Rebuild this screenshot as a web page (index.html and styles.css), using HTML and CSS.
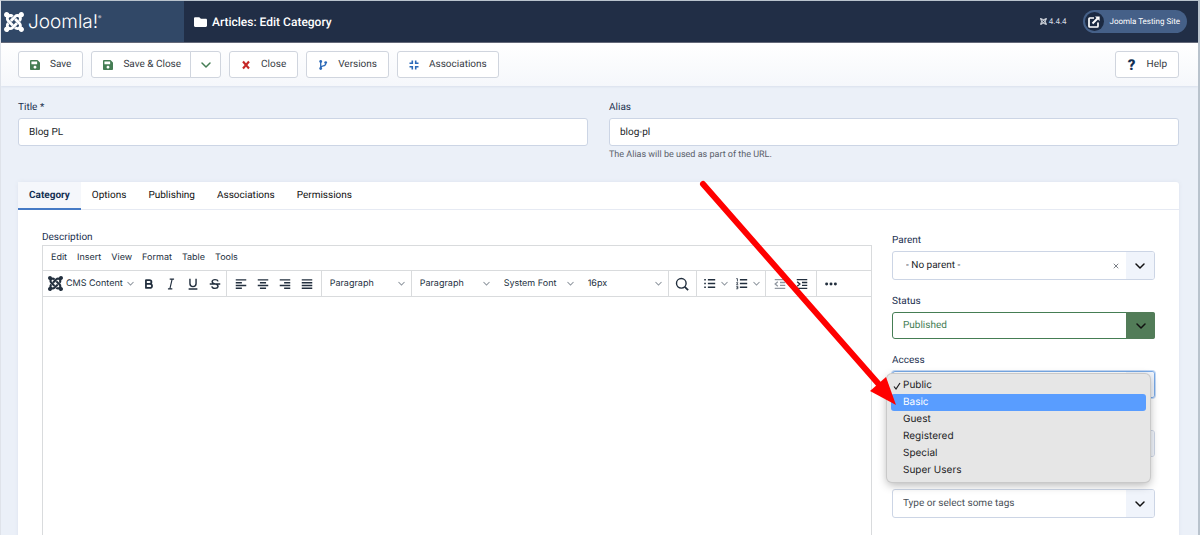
FILE: index.html
```html
<!DOCTYPE html>
<html lang="en">
<head>
<meta charset="utf-8">
<meta name="viewport" content="width=device-width, initial-scale=1">
<title>Articles: Edit Category</title>
<link rel="stylesheet" href="styles.css">
</head>
<body>
<svg class="sprite" aria-hidden="true">
  <symbol id="joomla" viewBox="0 32 448 448"><path d="M.6 92.1C.6 58.8 27.4 32 60.4 32c30 0 54.5 21.9 59.2 50.2 32.6-7.6 67.1.6 96.5 30l-44.3 44.3c-20.5-20.5-42.6-16.3-55.4-3.5-14.3 14.3-14.3 37.9 0 52.2l99.5 99.5-44 44.3c-87.7-87.2-49.7-49.7-99.8-99.7-26.8-26.5-35-64.8-24.8-98.9C20.4 144.6.6 120.7.6 92.1zm129.5 116.4l44.3 44.3c10-10 89.7-89.7 99.7-99.8 14.3-14.3 37.6-14.3 51.9 0 12.8 12.8 17 35-3.5 55.4l44 44.3c31.2-31.2 38.5-67.6 28.9-101.2 29.2-4.1 51.9-29.2 51.9-59.5 0-33.2-26.8-60.1-59.8-60.1-30.3 0-55.4 22.5-59.5 51.6-33.8-9.9-71.7-1.5-98.3 25.1-18.3 19.1-71.1 71.5-99.6 99.9zm266.3 152.2c8.2-32.7-.9-68.5-26.3-93.9-11.8-12.2 5 4.7-99.5-99.7l-44.3 44.3 99.7 99.7c14.3 14.3 14.3 37.6 0 51.9-12.8 12.8-35 17-55.4-3.5l-44 44.3c27.6 30.2 68 38.8 102.7 28 5.5 27.4 29.7 48.1 58.9 48.1 33 0 59.8-26.8 59.8-60.1 0-30.2-22.5-55-51.6-59.1zm-84.3-53.1l-44-44.3c-87 86.4-50.4 50.4-99.7 99.8-14.3 14.3-37.6 14.3-51.9 0-13.1-13.4-16.9-35.3 3.2-55.4l-44-44.3c-30.2 30.2-38 65.2-29.5 98.3-26.7 6-46.2 29.9-46.2 58.2C0 453.2 26.8 480 59.8 480c28.6 0 52.5-19.8 58.6-46.7 32.7 8.2 68.5-.6 94.2-26 32.1-32 12.2-12.4 99.5-99.7z"/></symbol>
  <symbol id="save" viewBox="0 32 448 448"><path d="M433.941 129.941l-83.882-83.882A48 48 0 0 0 316.118 32H48C21.49 32 0 53.49 0 80v352c0 26.51 21.49 48 48 48h352c26.51 0 48-21.49 48-48V163.882a48 48 0 0 0-14.059-33.941zM224 416c-35.346 0-64-28.654-64-64 0-35.346 28.654-64 64-64s64 28.654 64 64c0 35.346-28.654 64-64 64zm96-304.52V212c0 6.627-5.373 12-12 12H76c-6.627 0-12-5.373-12-12V108c0-6.627 5.373-12 12-12h228.52c3.183 0 6.235 1.264 8.485 3.515l3.48 3.48A11.996 11.996 0 0 1 320 111.48z"/></symbol>
  <symbol id="chevron" viewBox="0 0 12 12"><path d="M2 4l4 4 4-4" fill="none" stroke="currentColor" stroke-width="1.5" stroke-linecap="round" stroke-linejoin="round"/></symbol>
  <symbol id="thin-chevron" viewBox="0 0 12 12"><path d="M2 4l4 4 4-4" fill="none" stroke="currentColor" stroke-width="1.4"/></symbol>
</svg>

<div class="app">
  <header class="header">
    <a class="brand" href="#"><svg class="brand-mark"><use href="#joomla"/></svg><span class="brand-name">Joomla!<sup>®</sup></span></a>
    <h1 class="page-title"><svg class="icon-folder" viewBox="0 64 512 384"><path d="M464 128H272l-64-64H48C21.490 64 0 85.490 0 112v288c0 26.510 21.490 48 48 48h416c26.510 0 48-21.490 48-48V176c0-26.510-21.490-48-48-48z"/></svg>Articles: Edit Category</h1>
    <span class="version"><svg class="version-mark"><use href="#joomla"/></svg>4.4.4</span>
    <a class="site-link" href="#"><span class="site-icon"><svg viewBox="0 0 12 12"><path d="M6 2H1.800Q1 2 1 2.800V10.200Q1 11 1.800 11H9.200Q10 11 10 10.200V6.500" fill="none" stroke="currentColor" stroke-width="1.700"/><path d="M4.500 7.500L9.500 2.500" stroke="currentColor" stroke-width="1.900"/><path d="M7 .4h4.600V5z"/></svg></span>Joomla Testing Site</a>
  </header>

  <div class="toolbar" role="toolbar" aria-label="Toolbar">
    <button class="btn" type="button"><svg class="icon green"><use href="#save"/></svg>Save</button>
    <div class="btn-group">
      <button class="btn" type="button"><svg class="icon green"><use href="#save"/></svg>Save &amp; Close</button>
      <button class="btn btn-split" type="button" aria-label="More save options"><svg class="chev green"><use href="#chevron"/></svg></button>
    </div>
    <button class="btn" type="button"><svg class="icon red" viewBox="0 0 10 10"><path d="M2 1.500L8 8.500M8 1.500L2 8.500" stroke="currentColor" stroke-width="2.100"/></svg>Close</button>
    <button class="btn" type="button"><svg class="icon blue" viewBox="0 0 10 10"><g fill="none" stroke="currentColor" stroke-width="1.300"><path d="M2.700 1.800V8.600M7.700 3.500Q7.700 5.600 5.300 5.900Q3 6.200 2.700 7.500"/></g><circle cx="2.700" cy="1.500" r="1.400"/><circle cx="2.700" cy="8.500" r="1.400"/><circle cx="7.700" cy="2.600" r="1.400"/></svg>Versions</button>
    <button class="btn" type="button"><svg class="icon blue" viewBox="0 0 10 10"><path d="M3.300 .5V3.300H.5M6.700 .5V3.300H9.500M3.300 9.500V6.700H.5M6.700 9.500V6.700H9.500" fill="none" stroke="currentColor" stroke-width="1.600"/></svg>Associations</button>
    <button class="btn btn-help" type="button"><span class="question">?</span>Help</button>
  </div>

  <main class="content">
    <div class="title-row">
      <div class="field">
        <label for="title">Title *</label>
        <input class="control" id="title" type="text" value="Blog PL">
      </div>
      <div class="field">
        <label for="alias">Alias</label>
        <input class="control" id="alias" type="text" value="blog-pl">
        <small class="hint">The Alias will be used as part of the URL.</small>
      </div>
    </div>

    <section class="card">
      <div class="tabs" role="tablist">
        <button class="tab active" role="tab" type="button" aria-selected="true">Category</button>
        <button class="tab" role="tab" type="button">Options</button>
        <button class="tab" role="tab" type="button">Publishing</button>
        <button class="tab" role="tab" type="button">Associations</button>
        <button class="tab" role="tab" type="button">Permissions</button>
      </div>
      <div class="panel">
        <div class="description">
          <label for="body">Description</label>
          <div class="editor">
            <div class="menubar">
              <button type="button">Edit</button><button type="button">Insert</button><button type="button">View</button><button type="button">Format</button><button type="button">Table</button><button type="button">Tools</button>
            </div>
            <div class="tools">
              <div class="group">
                <button class="cms" type="button"><svg class="cms-mark"><use href="#joomla"/></svg>CMS Content<svg class="tiny-chev"><use href="#thin-chevron"/></svg></button>
                <button class="tool" type="button" aria-label="Bold"><svg viewBox="0 0 16 16"><path d="M4.500 3v10M4 3.500h4.500q2.300 0 2.300 2.100T8.500 7.800H4.500M8.500 7.800q3 0 3 2.400t-3 2.300H4" fill="none" stroke="currentColor" stroke-width="2"/></svg></button>
                <button class="tool" type="button" aria-label="Italic"><svg viewBox="0 0 16 16"><path d="M6.500 2.500h5M4.500 13.500h5M9.300 2.500l-2.600 11" fill="none" stroke="currentColor" stroke-width="1.300"/></svg></button>
                <button class="tool" type="button" aria-label="Underline"><svg viewBox="0 0 16 16"><path d="M4.500 2v5.500a3.500 3.500 0 0 0 7 0V2M3 13.700h10" fill="none" stroke="currentColor" stroke-width="1.600"/></svg></button>
                <button class="tool" type="button" aria-label="Strikethrough"><svg viewBox="0 0 16 16"><path d="M11.500 5Q11 3 8 3T4.700 5.200Q4.700 7.300 8 7.800T11.500 10.800Q11.200 13 8 13T4.300 10.700M2 8h12" fill="none" stroke="currentColor" stroke-width="1.600"/></svg></button>
              </div>
              <div class="group">
                <button class="tool" type="button" aria-label="Align left"><svg viewBox="0 0 16 16"><path d="M2 3.300h12M2 6.500h7M2 9.700h12M2 12.900h7" stroke="currentColor" stroke-width="1.600"/></svg></button>
                <button class="tool" type="button" aria-label="Align center"><svg viewBox="0 0 16 16"><path d="M2 3.300h12M4.500 6.500h7M2 9.700h12M4.500 12.900h7" stroke="currentColor" stroke-width="1.600"/></svg></button>
                <button class="tool" type="button" aria-label="Align right"><svg viewBox="0 0 16 16"><path d="M2 3.300h12M7 6.500h7M2 9.700h12M7 12.900h7" stroke="currentColor" stroke-width="1.600"/></svg></button>
                <button class="tool" type="button" aria-label="Justify"><svg viewBox="0 0 16 16"><path d="M2 3.300h12M2 6.500h12M2 9.700h12M2 12.900h12" stroke="currentColor" stroke-width="1.600"/></svg></button>
              </div>
              <div class="group">
                <span class="mini-select"><select aria-label="Styles"><option>Paragraph</option></select><svg class="tiny-chev"><use href="#thin-chevron"/></svg></span>
              </div>
              <div class="group">
                <span class="mini-select"><select aria-label="Block"><option>Paragraph</option></select><svg class="tiny-chev"><use href="#thin-chevron"/></svg></span>
                <span class="mini-select"><select aria-label="Font"><option>System Font</option></select><svg class="tiny-chev"><use href="#thin-chevron"/></svg></span>
                <span class="mini-select"><select aria-label="Font size"><option>16px</option></select><svg class="tiny-chev"><use href="#thin-chevron"/></svg></span>
              </div>
              <div class="group">
                <button class="tool tool-wide" type="button" aria-label="Find"><svg viewBox="0 0 16 16"><circle cx="7.200" cy="7.200" r="5.500" fill="none" stroke="currentColor" stroke-width="1.600"/><path d="M11.200 11.200L15 15" stroke="currentColor" stroke-width="2"/></svg></button>
              </div>
              <div class="group">
                <button class="tool list" type="button" aria-label="Bullet list"><svg viewBox="0 0 16 16"><path d="M6 3.500h9M6 8h9M6 12.500h9M1.500 3.500h2M1.500 8h2M1.500 12.500h2" stroke="currentColor" stroke-width="1.800"/></svg><svg class="tiny-chev"><use href="#thin-chevron"/></svg></button>
                <button class="tool list" type="button" aria-label="Numbered list"><svg viewBox="0 0 16 16"><path d="M6 3.500h9M6 8h9M6 12.500h9" stroke="currentColor" stroke-width="1.800"/><path d="M1.500 2h1.500v3.500M1.500 7h2L2 9.500h2M1.500 11.500h2v3h-2M2 13h1.500" fill="none" stroke="currentColor"/></svg><svg class="tiny-chev"><use href="#thin-chevron"/></svg></button>
              </div>
              <div class="group">
                <button class="tool faded" type="button" aria-label="Decrease indent"><svg viewBox="0 0 16 16"><path d="M2 3h12M8 6.300h6M8 9.600h6M2 13h12M5.500 5.500L2.500 8l3 2.500" fill="none" stroke="currentColor" stroke-width="1.500"/></svg></button>
                <button class="tool" type="button" aria-label="Increase indent"><svg viewBox="0 0 16 16"><path d="M2 3h12M8 6.300h6M8 9.600h6M2 13h12M2.500 5.500L5.500 8l-3 2.500" fill="none" stroke="currentColor" stroke-width="1.600"/></svg></button>
              </div>
              <div class="group">
                <button class="tool tool-wide" type="button" aria-label="More"><svg viewBox="0 0 16 16"><circle cx="3" cy="8" r="1.700"/><circle cx="8" cy="8" r="1.700"/><circle cx="13" cy="8" r="1.700"/></svg></button>
              </div>
            </div>
            <textarea class="editor-body" id="body"></textarea>
          </div>
        </div>

        <aside class="sidebar">
          <div class="field">
            <label for="parent">Parent</label>
            <div class="picker choices">
              <select class="control" id="parent"><option>- No parent -</option></select>
              <button class="clear" type="button" aria-label="Clear"><svg viewBox="0 0 8 8"><path d="M1 1l6 6M7 1L1 7" stroke="currentColor" stroke-width="1.200"/></svg></button>
              <span class="arrow"><svg class="chev"><use href="#chevron"/></svg></span>
            </div>
          </div>
          <div class="field">
            <label for="status">Status</label>
            <div class="picker published">
              <select class="control" id="status"><option>Published</option></select>
              <span class="arrow"><svg class="chev"><use href="#chevron"/></svg></span>
            </div>
          </div>
          <div class="field">
            <label for="access">Access</label>
            <div class="picker focused">
              <select class="control" id="access"><option>Public</option><option>Basic</option><option>Guest</option><option>Registered</option><option>Special</option><option>Super Users</option></select>
              <span class="arrow"><svg class="chev"><use href="#chevron"/></svg></span>
              <ul class="popup" role="listbox" aria-label="Access">
                <li role="option" aria-selected="true"><svg class="check" viewBox="0 0 8 8"><path d="M1 4.500L3 7 7 1" fill="none" stroke="currentColor" stroke-width="1.200"/></svg>Public</li>
                <li class="hover" role="option">Basic</li>
                <li role="option">Guest</li>
                <li role="option">Registered</li>
                <li role="option">Special</li>
                <li role="option">Super Users</li>
              </ul>
            </div>
          </div>
          <div class="field">
            <label for="language">Language</label>
            <div class="picker">
              <select class="control" id="language"><option>All</option></select>
              <span class="arrow"><svg class="chev"><use href="#chevron"/></svg></span>
            </div>
          </div>
          <div class="field">
            <label for="tags">Tags</label>
            <div class="picker choices tags">
              <input class="control" id="tags" type="text" placeholder="Type or select some tags">
              <span class="arrow"><svg class="chev"><use href="#chevron"/></svg></span>
            </div>
          </div>
          <div class="field">
            <label for="note">Note</label>
            <input class="control" id="note" type="text">
          </div>
        </aside>
      </div>
    </section>
  </main>

  <svg class="pointer" viewBox="0 0 200 228" aria-hidden="true"><path d="M4 4L184 209" stroke="#f00" stroke-width="6" stroke-linecap="round"/><path d="M197 225L171 211 187 197z" fill="#f00"/></svg>
</div>
</body>
</html>
```

FILE: styles.css
```css
* { box-sizing: border-box; }

body {
  margin: 0;
  font-family: Roboto, "Liberation Sans", sans-serif;
  font-size: 10px;
  line-height: 16px;
  color: #22262a;
  text-rendering: geometricPrecision;
}

button, input, select, textarea { font: inherit; color: inherit; margin: 0; text-rendering: inherit; }
button { background: none; border: 0; padding: 0; cursor: pointer; }
svg { display: block; flex: none; fill: currentColor; }
.sprite { position: absolute; width: 0; height: 0; }

.app {
  position: relative;
  display: flex;
  flex-direction: column;
  height: 100vh;
  overflow: hidden;
  background: #ebf0f8;
  border: solid #b9c3cd;
  border-width: 1px 2px 0 1px;
  border-left-color: #dfe3ea;
}

/* Header */
.header {
  display: flex;
  align-items: center;
  flex: none;
  height: 42px;
  padding-right: 11px;
  background: #212e46;
  border-bottom: 1px solid #5b6070;
  color: #fff;
}
.brand {
  display: flex;
  align-items: center;
  gap: 4px;
  align-self: stretch;
  width: 183px;
  padding-left: 3px;
  background: #314867;
  color: #fff;
  text-decoration: none;
}
.brand-mark { width: 20px; height: 20px; }
.brand-name { font-family: Inter, sans-serif; font-weight: 300; font-size: 19px; line-height: 20px; }
.brand-name sup { font-size: 5px; line-height: 5px; vertical-align: 9px; }
.page-title {
  display: flex;
  align-items: center;
  gap: 5px;
  margin: 0 auto 0 10px;
  font-size: 12px;
  font-weight: 500;
}
.icon-folder { width: 13px; height: 10px; }
.version { display: flex; align-items: center; gap: 2px; margin-right: 16px; font-size: 8px; color: #d5d9e0; }
.version-mark { width: 7px; height: 7px; }
.site-link {
  display: flex;
  align-items: center;
  gap: 6px;
  height: 23px;
  padding: 0 7px 0 2px;
  border-radius: 12px;
  background: #456088;
  color: #fff;
  font-size: 8px;
  text-decoration: none;
}
.site-icon { display: grid; place-items: center; width: 19px; height: 19px; border-radius: 50%; background: #1c2a42; }
.site-icon svg { width: 12px; height: 12px; }

/* Action toolbar */
.toolbar {
  display: flex;
  align-items: center;
  gap: 8px;
  flex: none;
  height: 43px;
  padding: 0 19px 0 17px;
  background: linear-gradient(#fff, #f5f7fb);
  box-shadow: 0 1px 2px #d9e0ec;
}
.btn {
  display: flex;
  align-items: center;
  gap: 10px;
  height: 27px;
  padding: 0 11px;
  background: #fff;
  border: 1px solid #d0d5de;
  border-radius: 3px;
  color: #363b44;
}
.btn-group { display: flex; }
.btn-group .btn:first-child { border-radius: 3px 0 0 3px; padding-right: 9px; }
.btn-group .btn-split { width: 31px; margin-left: -1px; padding: 0 9px; border-radius: 0 3px 3px 0; }
.btn-help { margin-left: auto; }
.icon { width: 10px; height: 10px; }
.chev { width: 12px; height: 12px; }
.green { color: #457d54; }
.red { color: #c52827; }
.blue { color: #2a69b8; }
.question { width: 10px; text-align: center; font-size: 15px; font-weight: 900; color: #132f53; }

/* Form */
.content { flex: 1; min-height: 0; padding: 14px 19px 0 17px; }
.title-row { display: grid; grid-template-columns: 1fr 1fr; gap: 21px; }
.field { display: flex; flex-direction: column; gap: 2px; color: #22304f; }
.control {
  width: 100%;
  height: 28px;
  padding: 0 10px;
  background: #fff;
  border: 1px solid #ccd5e5;
  border-radius: 3px;
  color: #22262a;
  outline: 0;
}
.hint { font-size: 9px; line-height: 10px; padding-top: 2px; color: #5a606a; }

.card { margin-top: 22px; background: #fff; border-radius: 3px 3px 0 0; box-shadow: 0 0 4px #dde3ee; }
.tabs { display: flex; height: 28px; border-bottom: 1px solid #e6eaf3; }
.tab { height: 28px; padding: 2px 11px 0; border-bottom: 2px solid transparent; color: #111; }
.tab.active { background: #f5f7fb; border-color: #457ac5; color: #132f53; font-weight: 700; }

.panel {
  display: grid;
  grid-template-columns: minmax(0, 1fr) 263px;
  gap: 20px;
  padding: 20px 24px 24px;
}
.description { display: flex; flex-direction: column; color: #22304f; }
.description label { line-height: 15px; }
.editor { flex: 1; display: flex; flex-direction: column; border: 1px solid #d9dbdd; color: #222f3e; font-family: Inter, sans-serif; font-size: 9px; }
.menubar { display: flex; gap: 10px; height: 25px; padding: 0 8px; border-bottom: 1px solid #d9dbdd; }
.tools { display: flex; height: 26px; border-bottom: 1px solid #d9dbdd; }
.group { display: flex; align-items: center; padding: 0 3px; border-right: 1px solid #d9dbdd; }
.group:first-child { padding: 0 0 0 5px; }
.group:nth-child(3), .group:nth-child(4) { padding: 0; }
.group:nth-child(5), .group:nth-child(6) { padding: 0 2px; }
.group:last-child { border-right: 0; }
.cms { display: flex; align-items: center; gap: 3px; padding-right: 3px; }
.cms-mark { width: 15px; height: 15px; }
.tiny-chev { width: 9px; height: 9px; color: #8a929b; }
.tool { display: grid; place-items: center; width: 22px; height: 24px; }
.tool svg:first-child { width: 14px; height: 14px; }
.tool-wide { width: 23px; }
.tool.list { display: flex; align-items: center; gap: 4px; width: 32px; padding-left: 4px; }
.tool.list svg:first-child { width: 13px; height: 13px; }
.faded { color: #9097a0; }
.mini-select { display: flex; align-items: center; width: 89px; padding-right: 5px; }
.mini-select select { flex: 1; min-width: 0; height: 24px; padding: 0 0 0 8px; border: 0; background: none; appearance: none; }
.group:nth-child(4) .mini-select { width: 84px; }
.group:nth-child(4) .mini-select:last-child { width: 88px; }
.editor-body { flex: 1; width: 100%; border: 0; padding: 8px; resize: none; outline: 0; }

.sidebar { display: flex; flex-direction: column; gap: 14px; padding-top: 3px; }
.picker { position: relative; display: flex; align-items: center; }
.picker .control { appearance: none; height: 27px; padding-right: 32px; }
.choices .control { height: 29px; padding-left: 13px; }
.tags .control { padding-left: 10px; }
.control::placeholder { color: #495057; opacity: 1; }
.arrow {
  position: absolute;
  inset: 1px 1px 1px auto;
  display: grid;
  place-items: center;
  width: 28px;
  border-radius: 0 2px 2px 0;
  background: #f0f4fb;
  color: #111;
  pointer-events: none;
}
.clear { position: absolute; right: 36px; top: 12px; color: #6d737b; }
.clear svg { width: 6px; height: 6px; }
.published .control { border-color: #457d54; color: #457d54; }
.published .arrow { inset: 0 0 0 auto; width: 29px; background: #527c58; }
.focused .control { border-color: #78a9e6; box-shadow: 0 0 0 1px #c4d9f5; }

.popup {
  position: absolute;
  z-index: 2;
  top: 3px;
  left: -5px;
  right: 5px;
  margin: 0;
  padding: 3px 4px;
  list-style: none;
  background: #e6e6e6;
  border-radius: 5px;
  box-shadow: 0 0 0 1px #c9c9c9, 0 3px 10px rgba(0, 0, 0, .3);
  color: #1d1d1f;
  font-family: Inter, sans-serif;
  font-size: 10px;
  line-height: 17px;
}
.popup li { position: relative; padding-left: 12px; border-radius: 3px; }
.popup .hover { background: #599dff; color: #fff; }
.check { position: absolute; left: 2px; top: 5px; width: 8px; height: 8px; }

/* Annotation drawn over the form */
.pointer { position: absolute; z-index: 3; left: 698px; top: 179px; width: 200px; height: 228px; }
```
